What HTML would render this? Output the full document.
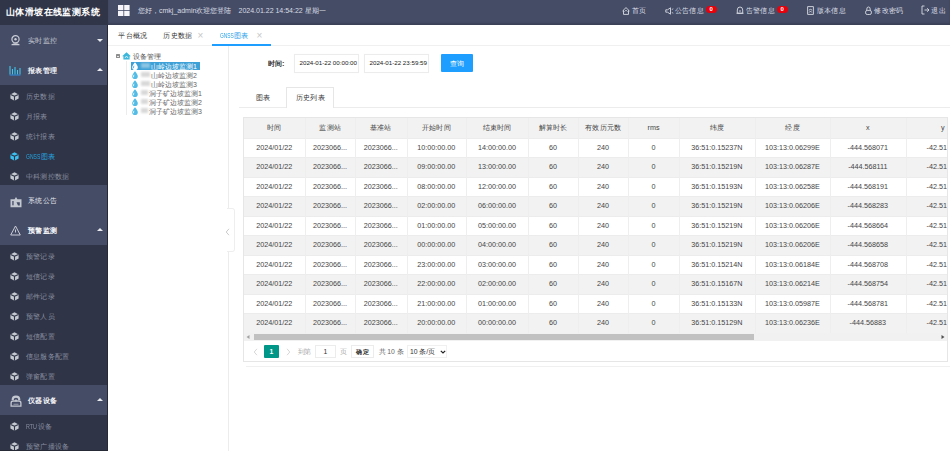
<!DOCTYPE html>
<html><head><meta charset="utf-8">
<style>
*{margin:0;padding:0;box-sizing:border-box}
html,body{width:950px;height:451px;overflow:hidden;background:#fff;font-family:"Liberation Sans",sans-serif;position:relative}
.abs{position:absolute}
.k{display:inline-block;width:1em;text-align:center}
.t{position:absolute;white-space:nowrap;line-height:1}
#side{position:absolute;left:0;top:0;width:108px;height:451px;background:#2f3446}
#logo{position:absolute;left:0;top:0;width:108px;height:25px;background:#303548}
.top{position:absolute;left:0;width:107px;height:30px;background:#454c66}
.caret{position:absolute;left:97px;width:0;height:0;border-left:3px solid transparent;border-right:3px solid transparent}
.caret.dn{border-top:3px solid #e9ebf0;top:14px}
.caret.up{border-bottom:3px solid #e9ebf0;top:13px}
.tl{font-size:7.4px;color:#c9cdd6;left:27.8px}
.tl.b{color:#f4f5f8;font-weight:bold}
.tl.w{color:#e3e6ec}
.sl{font-size:7.2px;color:#8a90a2;left:26px}
#hdr{position:absolute;left:108px;top:0;width:842px;height:25px;background:#454c66;box-shadow:inset 0 -2px 2px rgba(0,0,0,0.15)}
.hl{font-size:7.4px;color:#d9dce4;top:6.9px}
.badge{position:absolute;top:5.6px;width:10.5px;height:7px;border-radius:3.5px;background:#e8000b;color:#fff;font-size:6px;font-weight:bold;text-align:center;line-height:7px}
#tabs{position:absolute;left:108px;top:25px;width:842px;height:21px;background:#fff;border-bottom:1px solid #f0f0f0}
.tb{font-size:7.4px;color:#333;top:7px}
.x{font-size:10px;color:#c8c8c8}
#tree{position:absolute;left:108px;top:46px;width:121px;height:405px;border-right:1px solid #ececec}
.tr{font-size:7px;color:#666;left:32px}
.lbl{font-size:7.2px;color:#333}
.inp{position:absolute;height:19px;border:1px solid #ececec;background:#fff;box-shadow:0 0 1px rgba(0,0,0,0.04)}
.it{font-size:6.2px;color:#222}
#tbox{position:absolute;left:243px;top:117px;width:705px;height:245px;border:1px solid #e6e6e6;overflow:hidden}
.c{font-size:7.2px;color:#444;text-align:center}
.pg{font-size:6.8px;color:#333}
</style></head><body>

<div id="side">
<div id="logo"></div><div class="t" style="left:6px;top:7px;font-size:9.4px;letter-spacing:0.6px;font-weight:bold;color:#fff"><span class="k">山</span><span class="k">体</span><span class="k">滑</span><span class="k">坡</span><span class="k">在</span><span class="k">线</span><span class="k">监</span><span class="k">测</span><span class="k">系</span><span class="k">统</span></div>
<div class="top" style="top:25px"></div><div class="t tl" style="top:36.8px"><span class="k">实</span><span class="k">时</span><span class="k">监</span><span class="k">控</span></div>
<div class="caret dn" style="top:39px"></div>
<div class="top" style="top:55px"></div><div class="t tl b" style="top:66.8px"><span class="k">报</span><span class="k">表</span><span class="k">管</span><span class="k">理</span></div>
<div class="caret up" style="top:68px"></div>
<div class="top" style="top:185px"></div><div class="t tl w" style="top:196.8px"><span class="k">系</span><span class="k">统</span><span class="k">公</span><span class="k">告</span></div>
<div class="top" style="top:215px"></div><div class="t tl b" style="top:226.8px"><span class="k">预</span><span class="k">警</span><span class="k">监</span><span class="k">测</span></div>
<div class="caret up" style="top:228px"></div>
<div class="top" style="top:385px"></div><div class="t tl b" style="top:396.8px"><span class="k">仪</span><span class="k">器</span><span class="k">设</span><span class="k">备</span></div>
<div class="caret up" style="top:398px"></div>
<svg class="abs" style="left:10px;top:92px" width="9" height="9" viewBox="0 0 9 9"><path d="M4.5 0.3 L8.6 2.4 L8.6 6.6 L4.5 8.7 L0.4 6.6 L0.4 2.4 Z" fill="#c4c8d0"/><path d="M4.5 4.3 L4.5 8.7 M4.5 4.3 L0.6 2.4 M4.5 4.3 L8.4 2.4" stroke="#2f3446" stroke-width="1.1" fill="none"/></svg>
<div class="t sl" style="top:93.3px"><span class="k">历</span><span class="k">史</span><span class="k">数</span><span class="k">据</span></div>
<svg class="abs" style="left:10px;top:112px" width="9" height="9" viewBox="0 0 9 9"><path d="M4.5 0.3 L8.6 2.4 L8.6 6.6 L4.5 8.7 L0.4 6.6 L0.4 2.4 Z" fill="#c4c8d0"/><path d="M4.5 4.3 L4.5 8.7 M4.5 4.3 L0.6 2.4 M4.5 4.3 L8.4 2.4" stroke="#2f3446" stroke-width="1.1" fill="none"/></svg>
<div class="t sl" style="top:113.3px"><span class="k">月</span><span class="k">报</span><span class="k">表</span></div>
<svg class="abs" style="left:10px;top:132px" width="9" height="9" viewBox="0 0 9 9"><path d="M4.5 0.3 L8.6 2.4 L8.6 6.6 L4.5 8.7 L0.4 6.6 L0.4 2.4 Z" fill="#c4c8d0"/><path d="M4.5 4.3 L4.5 8.7 M4.5 4.3 L0.6 2.4 M4.5 4.3 L8.4 2.4" stroke="#2f3446" stroke-width="1.1" fill="none"/></svg>
<div class="t sl" style="top:133.3px"><span class="k">统</span><span class="k">计</span><span class="k">报</span><span class="k">表</span></div>
<svg class="abs" style="left:10px;top:152px" width="9" height="9" viewBox="0 0 9 9"><path d="M4.5 0.3 L8.6 2.4 L8.6 6.6 L4.5 8.7 L0.4 6.6 L0.4 2.4 Z" fill="#3cc0ef"/><path d="M4.5 4.3 L4.5 8.7 M4.5 4.3 L0.6 2.4 M4.5 4.3 L8.4 2.4" stroke="#2f3446" stroke-width="1.1" fill="none"/></svg>
<div class="t sl" style="top:153.3px;color:#25a5e2"><span style="display:inline-block;width:14.5px"><span style="display:inline-block;transform:scaleX(0.7);transform-origin:0 50%">GNSS</span></span><span class="k">图</span><span class="k">表</span></div>
<svg class="abs" style="left:10px;top:172px" width="9" height="9" viewBox="0 0 9 9"><path d="M4.5 0.3 L8.6 2.4 L8.6 6.6 L4.5 8.7 L0.4 6.6 L0.4 2.4 Z" fill="#c4c8d0"/><path d="M4.5 4.3 L4.5 8.7 M4.5 4.3 L0.6 2.4 M4.5 4.3 L8.4 2.4" stroke="#2f3446" stroke-width="1.1" fill="none"/></svg>
<div class="t sl" style="top:173.3px"><span class="k">中</span><span class="k">科</span><span class="k">测</span><span class="k">控</span><span class="k">数</span><span class="k">据</span></div>
<svg class="abs" style="left:10px;top:252px" width="9" height="9" viewBox="0 0 9 9"><path d="M4.5 0.3 L8.6 2.4 L8.6 6.6 L4.5 8.7 L0.4 6.6 L0.4 2.4 Z" fill="#c4c8d0"/><path d="M4.5 4.3 L4.5 8.7 M4.5 4.3 L0.6 2.4 M4.5 4.3 L8.4 2.4" stroke="#2f3446" stroke-width="1.1" fill="none"/></svg>
<div class="t sl" style="top:253.3px"><span class="k">预</span><span class="k">警</span><span class="k">记</span><span class="k">录</span></div>
<svg class="abs" style="left:10px;top:272px" width="9" height="9" viewBox="0 0 9 9"><path d="M4.5 0.3 L8.6 2.4 L8.6 6.6 L4.5 8.7 L0.4 6.6 L0.4 2.4 Z" fill="#c4c8d0"/><path d="M4.5 4.3 L4.5 8.7 M4.5 4.3 L0.6 2.4 M4.5 4.3 L8.4 2.4" stroke="#2f3446" stroke-width="1.1" fill="none"/></svg>
<div class="t sl" style="top:273.3px"><span class="k">短</span><span class="k">信</span><span class="k">记</span><span class="k">录</span></div>
<svg class="abs" style="left:10px;top:292px" width="9" height="9" viewBox="0 0 9 9"><path d="M4.5 0.3 L8.6 2.4 L8.6 6.6 L4.5 8.7 L0.4 6.6 L0.4 2.4 Z" fill="#c4c8d0"/><path d="M4.5 4.3 L4.5 8.7 M4.5 4.3 L0.6 2.4 M4.5 4.3 L8.4 2.4" stroke="#2f3446" stroke-width="1.1" fill="none"/></svg>
<div class="t sl" style="top:293.3px"><span class="k">邮</span><span class="k">件</span><span class="k">记</span><span class="k">录</span></div>
<svg class="abs" style="left:10px;top:312px" width="9" height="9" viewBox="0 0 9 9"><path d="M4.5 0.3 L8.6 2.4 L8.6 6.6 L4.5 8.7 L0.4 6.6 L0.4 2.4 Z" fill="#c4c8d0"/><path d="M4.5 4.3 L4.5 8.7 M4.5 4.3 L0.6 2.4 M4.5 4.3 L8.4 2.4" stroke="#2f3446" stroke-width="1.1" fill="none"/></svg>
<div class="t sl" style="top:313.3px"><span class="k">预</span><span class="k">警</span><span class="k">人</span><span class="k">员</span></div>
<svg class="abs" style="left:10px;top:332px" width="9" height="9" viewBox="0 0 9 9"><path d="M4.5 0.3 L8.6 2.4 L8.6 6.6 L4.5 8.7 L0.4 6.6 L0.4 2.4 Z" fill="#c4c8d0"/><path d="M4.5 4.3 L4.5 8.7 M4.5 4.3 L0.6 2.4 M4.5 4.3 L8.4 2.4" stroke="#2f3446" stroke-width="1.1" fill="none"/></svg>
<div class="t sl" style="top:333.3px"><span class="k">短</span><span class="k">信</span><span class="k">配</span><span class="k">置</span></div>
<svg class="abs" style="left:10px;top:352px" width="9" height="9" viewBox="0 0 9 9"><path d="M4.5 0.3 L8.6 2.4 L8.6 6.6 L4.5 8.7 L0.4 6.6 L0.4 2.4 Z" fill="#c4c8d0"/><path d="M4.5 4.3 L4.5 8.7 M4.5 4.3 L0.6 2.4 M4.5 4.3 L8.4 2.4" stroke="#2f3446" stroke-width="1.1" fill="none"/></svg>
<div class="t sl" style="top:353.3px"><span class="k">信</span><span class="k">息</span><span class="k">服</span><span class="k">务</span><span class="k">配</span><span class="k">置</span></div>
<svg class="abs" style="left:10px;top:372px" width="9" height="9" viewBox="0 0 9 9"><path d="M4.5 0.3 L8.6 2.4 L8.6 6.6 L4.5 8.7 L0.4 6.6 L0.4 2.4 Z" fill="#c4c8d0"/><path d="M4.5 4.3 L4.5 8.7 M4.5 4.3 L0.6 2.4 M4.5 4.3 L8.4 2.4" stroke="#2f3446" stroke-width="1.1" fill="none"/></svg>
<div class="t sl" style="top:373.3px"><span class="k">弹</span><span class="k">窗</span><span class="k">配</span><span class="k">置</span></div>
<svg class="abs" style="left:10px;top:422px" width="9" height="9" viewBox="0 0 9 9"><path d="M4.5 0.3 L8.6 2.4 L8.6 6.6 L4.5 8.7 L0.4 6.6 L0.4 2.4 Z" fill="#c4c8d0"/><path d="M4.5 4.3 L4.5 8.7 M4.5 4.3 L0.6 2.4 M4.5 4.3 L8.4 2.4" stroke="#2f3446" stroke-width="1.1" fill="none"/></svg>
<div class="t sl" style="top:423.3px"><span style="display:inline-block;width:11.5px"><span style="display:inline-block;transform:scaleX(0.75);transform-origin:0 50%">RTU</span></span><span class="k">设</span><span class="k">备</span></div>
<svg class="abs" style="left:10px;top:442px" width="9" height="9" viewBox="0 0 9 9"><path d="M4.5 0.3 L8.6 2.4 L8.6 6.6 L4.5 8.7 L0.4 6.6 L0.4 2.4 Z" fill="#c4c8d0"/><path d="M4.5 4.3 L4.5 8.7 M4.5 4.3 L0.6 2.4 M4.5 4.3 L8.4 2.4" stroke="#2f3446" stroke-width="1.1" fill="none"/></svg>
<div class="t sl" style="top:443.3px"><span class="k">预</span><span class="k">警</span><span class="k">广</span><span class="k">播</span><span class="k">设</span><span class="k">备</span></div>
<svg class="abs" style="left:10px;top:35px" width="11" height="11" viewBox="0 0 11 11"><circle cx="5.5" cy="4.3" r="3.6" fill="none" stroke="#c9ccd5" stroke-width="1.2"/><circle cx="5.5" cy="4.3" r="1.2" fill="#c9ccd5"/><path d="M1.5 9.3 Q5.5 7.3 9.5 9.3 L9.5 10.3 L1.5 10.3 Z" fill="#c9ccd5"/></svg>
<svg class="abs" style="left:9px;top:65px" width="12" height="11" viewBox="0 0 12 11"><path d="M1 1 V9.5 M3.5 4 V9.5 M6 2 V9.5 M8.5 5 V9.5 M11 3 V9.5" stroke="#3fc6ee" stroke-width="1.1"/><path d="M0.5 10 H11.5" stroke="#2c8fe0" stroke-width="1"/></svg>
<svg class="abs" style="left:10px;top:196px" width="12" height="12" viewBox="0 0 12 12"><path d="M0.5 3.2 H4.6 L6 1 L7.4 3.2 H11.5 V11.2 H0.5 Z" fill="#c4c8d1"/><rect x="2.3" y="5" width="1.3" height="4.3" fill="#454c66"/><path d="M6.5 6.3 H9.8 V9.6 H8 Z" fill="#454c66"/></svg>
<svg class="abs" style="left:10px;top:225px" width="11" height="11" viewBox="0 0 11 11"><path d="M5.5 1 L10.3 10 L0.7 10 Z" fill="none" stroke="#c9ccd5" stroke-width="1"/><path d="M5.5 4.5 V7.5" stroke="#c9ccd5" stroke-width="1"/></svg>
<svg class="abs" style="left:10px;top:395px" width="12" height="12" viewBox="0 0 12 12"><path d="M1.6 5 Q1.6 0.6 6 0.6 Q10.4 0.6 10.4 5 L8.3 5 Q8.3 2.8 6 2.8 Q3.7 2.8 3.7 5 Z" fill="#c4c8d1"/><path d="M1.1 11.2 V8 Q1.1 6 3.1 6 H8.9 Q10.9 6 10.9 8 V11.2 Z" fill="none" stroke="#c4c8d1" stroke-width="1.3"/><path d="M3.5 9.3 H8.5" stroke="#8a90a0" stroke-width="1.2"/><path d="M6 4.5 V6.5" stroke="#c4c8d1" stroke-width="1.5"/></svg>
<div class="abs" style="left:107px;top:25px;width:1px;height:426px;background:#262a36"></div><div class="abs" style="left:0;top:450px;width:108px;height:1px;background:#262a36"></div>
</div>
<div id="hdr"></div>
<svg class="abs" style="left:117.5px;top:4.5px" width="12" height="11" viewBox="0 0 12 11"><rect x="0" y="0" width="5.4" height="5.1" fill="#f6f6fa"/><rect x="6.2" y="0" width="5.4" height="5.1" fill="#f6f6fa"/><rect x="0" y="5.9" width="5.4" height="5.1" fill="#f6f6fa"/><rect x="6.2" y="5.9" width="5.4" height="5.1" fill="#f6f6fa"/></svg>
<div class="t hl" style="left:138px;top:6.8px;font-size:7px"><span class="k">您</span><span class="k">好</span><span class="k">，</span>cmkj_admin<span class="k">欢</span><span class="k">迎</span><span class="k">您</span><span class="k">登</span><span class="k">陆</span></div>
<div class="t hl" style="left:238.5px;top:6.8px;font-size:7px">2024.01.22 14:54:22 <span class="k">星</span><span class="k">期</span><span class="k">一</span></div>
<div class="t hl" style="left:631.5px"><span class="k">首</span><span class="k">页</span></div>
<div class="t hl" style="left:674.5px"><span class="k">公</span><span class="k">告</span><span class="k">信</span><span class="k">息</span></div>
<div class="t hl" style="left:745.5px"><span class="k">告</span><span class="k">警</span><span class="k">信</span><span class="k">息</span></div>
<div class="t hl" style="left:816.5px"><span class="k">版</span><span class="k">本</span><span class="k">信</span><span class="k">息</span></div>
<div class="t hl" style="left:874px"><span class="k">修</span><span class="k">改</span><span class="k">密</span><span class="k">码</span></div>
<div class="t hl" style="left:931px"><span class="k">退</span><span class="k">出</span></div>
<div class="badge" style="left:706px">0</div><div class="badge" style="left:777px">0</div>
<svg class="abs" style="left:621.5px;top:6.8px" width="8" height="8" viewBox="0 0 8 8"><path d="M0.5 4 L4 0.6 L7.5 4 M1.5 3.2 V7.4 H6.5 V3.2 M2.6 4.6 L4 3.2 L5.4 4.6" fill="none" stroke="#d9dce4" stroke-width="0.9"/></svg>
<svg class="abs" style="left:664.5px;top:7.3px" width="9" height="8" viewBox="0 0 9 8"><path d="M0.8 2.8 H2.5 L5.5 0.8 V7.2 L2.5 5.2 H0.8 Z" fill="none" stroke="#d9dce4" stroke-width="0.9"/><path d="M6.8 2.5 L8.3 1.8 M6.8 5.5 L8.3 6.2" stroke="#d9dce4" stroke-width="0.8"/></svg>
<svg class="abs" style="left:736px;top:6px" width="8" height="8" viewBox="0 0 8 8"><path d="M1.3 7.2 V4 Q1.3 1 4 1 Q6.7 1 6.7 4 V7.2 Z M0.5 7.3 H7.5" fill="none" stroke="#d9dce4" stroke-width="0.9"/><circle cx="4" cy="5" r="0.8" fill="#d9dce4"/></svg>
<svg class="abs" style="left:807px;top:6px" width="7" height="9" viewBox="0 0 7 9"><path d="M0.6 0.6 H6.4 V8.4 H0.6 Z M1.8 4.2 Q3.5 2.5 5.2 4.2 M2.2 6.5 L3.5 5 L4.8 6.5" fill="none" stroke="#d9dce4" stroke-width="0.9"/></svg>
<svg class="abs" style="left:865px;top:6px" width="7" height="9" viewBox="0 0 7 9"><path d="M1.8 4.3 V3 Q1.8 1 3.5 1 Q5.2 1 5.2 3 V4.3" fill="none" stroke="#d9dce4" stroke-width="0.9"/><rect x="0.6" y="4.4" width="5.8" height="4.1" rx="1.6" fill="none" stroke="#d9dce4" stroke-width="0.9"/></svg>
<svg class="abs" style="left:921px;top:5px" width="9" height="10" viewBox="0 0 9 10"><path d="M3.5 1 H1 V9 H3.5 M3.5 5 H8 M6.2 3.2 L8 5 L6.2 6.8" fill="none" stroke="#d9dce4" stroke-width="0.9"/></svg>
<div id="tabs"></div>
<div class="t tb" style="left:118px;top:32px"><span class="k">平</span><span class="k">台</span><span class="k">概</span><span class="k">况</span></div>
<div class="t tb" style="left:163px;top:32px"><span class="k">历</span><span class="k">史</span><span class="k">数</span><span class="k">据</span></div><div class="t x" style="left:197.5px;top:30.5px">×</div>
<div class="t tb" style="left:220px;top:32px;color:#27a1ea"><span style="display:inline-block;width:13.6px"><span style="display:inline-block;transform:scaleX(0.66);transform-origin:0 50%">GNSS</span></span><span class="k">图</span><span class="k">表</span></div><div class="t x" style="left:256.5px;top:30.5px">×</div>
<div class="abs" style="left:212px;top:44px;width:59px;height:2px;background:#1e9fff"></div>
<div id="tree"></div>
<div class="abs" style="left:115.5px;top:53.5px;width:4.5px;height:4.5px;background:#8e8e8e;border-radius:0.5px"></div><div class="abs" style="left:116.5px;top:55.5px;width:2.5px;height:0.8px;background:#e8e8e8"></div>
<svg class="abs" style="left:122px;top:52px" width="9" height="8" viewBox="0 0 9 8"><path d="M4.5 0.2 L8.9 4.2 L7.6 4.2 L7.6 7.6 L1.4 7.6 L1.4 4.2 L0.1 4.2 Z" fill="#3cb6da"/><path d="M2.8 5.6 Q4.5 3.6 6.2 5.6" fill="none" stroke="#fff" stroke-width="0.9"/></svg>
<div class="t" style="left:133px;top:52.5px;font-size:7px;color:#555"><span class="k">设</span><span class="k">备</span><span class="k">管</span><span class="k">理</span></div>
<div class="abs" style="left:126px;top:61px;width:1px;height:54px;background:#ececec"></div>
<div class="abs" style="left:131px;top:61.5px;width:69px;height:8.5px;background:#3da0d6"></div>
<svg class="abs" style="left:132px;top:62.099999999999994px" width="6" height="8" viewBox="0 0 6 8"><path d="M3 0.3 Q5.8 3.8 5.8 5.2 A2.8 2.8 0 0 1 0.2 5.2 Q0.2 3.8 3 0.3 Z" fill="#fff"/><path d="M2 3.8 Q1.2 5 1.6 6.2" fill="none" stroke="#3da0d6" stroke-width="0.8"/></svg>
<div class="abs" style="left:141px;top:63.3px;width:9px;height:5px;background:#8cc4e4;filter:blur(1px)"></div>
<div class="t" style="left:151px;top:62.8px;font-size:7px;color:#fff"><span class="k">山</span><span class="k">岭</span><span class="k">边</span><span class="k">坡</span><span class="k">监</span><span class="k">测</span>1</div>
<svg class="abs" style="left:132px;top:71.05px" width="6" height="8" viewBox="0 0 6 8"><path d="M3 0.3 Q5.8 3.8 5.8 5.2 A2.8 2.8 0 0 1 0.2 5.2 Q0.2 3.8 3 0.3 Z" fill="#52bce6"/><path d="M2 3.8 Q1.2 5 1.6 6.2" fill="none" stroke="#fff" stroke-width="0.8"/></svg>
<div class="abs" style="left:141px;top:72.25px;width:9px;height:5px;background:#d8d8d8;filter:blur(1px)"></div>
<div class="t" style="left:151px;top:71.75px;font-size:7px;color:#666"><span class="k">山</span><span class="k">岭</span><span class="k">边</span><span class="k">坡</span><span class="k">监</span><span class="k">测</span>2</div>
<svg class="abs" style="left:132px;top:79.99999999999999px" width="6" height="8" viewBox="0 0 6 8"><path d="M3 0.3 Q5.8 3.8 5.8 5.2 A2.8 2.8 0 0 1 0.2 5.2 Q0.2 3.8 3 0.3 Z" fill="#52bce6"/><path d="M2 3.8 Q1.2 5 1.6 6.2" fill="none" stroke="#fff" stroke-width="0.8"/></svg>
<div class="abs" style="left:141px;top:81.19999999999999px;width:9px;height:5px;background:#d8d8d8;filter:blur(1px)"></div>
<div class="t" style="left:151px;top:80.69999999999999px;font-size:7px;color:#666"><span class="k">山</span><span class="k">岭</span><span class="k">边</span><span class="k">坡</span><span class="k">监</span><span class="k">测</span>3</div>
<svg class="abs" style="left:132px;top:88.94999999999999px" width="6" height="8" viewBox="0 0 6 8"><path d="M3 0.3 Q5.8 3.8 5.8 5.2 A2.8 2.8 0 0 1 0.2 5.2 Q0.2 3.8 3 0.3 Z" fill="#52bce6"/><path d="M2 3.8 Q1.2 5 1.6 6.2" fill="none" stroke="#fff" stroke-width="0.8"/></svg>
<div class="abs" style="left:141px;top:90.14999999999999px;width:7px;height:5px;background:#d8d8d8;filter:blur(1px)"></div>
<div class="t" style="left:149px;top:89.64999999999999px;font-size:7px;color:#666"><span class="k">洞</span><span class="k">子</span><span class="k">矿</span><span class="k">边</span><span class="k">坡</span><span class="k">监</span><span class="k">测</span>1</div>
<svg class="abs" style="left:132px;top:97.89999999999999px" width="6" height="8" viewBox="0 0 6 8"><path d="M3 0.3 Q5.8 3.8 5.8 5.2 A2.8 2.8 0 0 1 0.2 5.2 Q0.2 3.8 3 0.3 Z" fill="#52bce6"/><path d="M2 3.8 Q1.2 5 1.6 6.2" fill="none" stroke="#fff" stroke-width="0.8"/></svg>
<div class="abs" style="left:141px;top:99.1px;width:7px;height:5px;background:#d8d8d8;filter:blur(1px)"></div>
<div class="t" style="left:149px;top:98.6px;font-size:7px;color:#666"><span class="k">洞</span><span class="k">子</span><span class="k">矿</span><span class="k">边</span><span class="k">坡</span><span class="k">监</span><span class="k">测</span>2</div>
<svg class="abs" style="left:132px;top:106.85px" width="6" height="8" viewBox="0 0 6 8"><path d="M3 0.3 Q5.8 3.8 5.8 5.2 A2.8 2.8 0 0 1 0.2 5.2 Q0.2 3.8 3 0.3 Z" fill="#52bce6"/><path d="M2 3.8 Q1.2 5 1.6 6.2" fill="none" stroke="#fff" stroke-width="0.8"/></svg>
<div class="abs" style="left:141px;top:108.05px;width:7px;height:5px;background:#d8d8d8;filter:blur(1px)"></div>
<div class="t" style="left:149px;top:107.55px;font-size:7px;color:#666"><span class="k">洞</span><span class="k">子</span><span class="k">矿</span><span class="k">边</span><span class="k">坡</span><span class="k">监</span><span class="k">测</span>3</div>
<div class="abs" style="left:227px;top:208px;width:8px;height:44px;border:1px solid #eeeeee;border-left:none;background:#fff;border-radius:0 3px 3px 0"></div>
<svg class="abs" style="left:225px;top:228px" width="5" height="8" viewBox="0 0 5 8"><path d="M4 0.8 L1.2 4 L4 7.2" fill="none" stroke="#c4c4c4" stroke-width="0.9"/></svg>
<div class="t lbl" style="left:267.5px;top:59.5px;font-weight:bold"><span class="k">时</span><span class="k">间</span>:</div>
<div class="inp" style="left:294px;top:53.5px;width:65px"></div><div class="t it" style="left:299.5px;top:60px">2024-01-22 00:00:00</div>
<div class="inp" style="left:364px;top:53.5px;width:65px"></div><div class="t it" style="left:369.5px;top:60px">2024-01-22 23:59:59</div>
<div class="abs" style="left:441px;top:53.5px;width:32px;height:18.5px;background:#1e9fff;border-radius:1px"></div><div class="t" style="left:450px;top:59.5px;font-size:7.2px;color:#fff"><span class="k">查</span><span class="k">询</span></div>
<div class="abs" style="left:239px;top:106.5px;width:711px;height:1px;background:#ececec"></div>
<div class="abs" style="left:286px;top:86.5px;width:48px;height:21px;border:1px solid #e6e6e6;border-bottom:none;background:#fff"></div>
<div class="t lbl" style="left:255.5px;top:94px"><span class="k">图</span><span class="k">表</span></div>
<div class="t lbl" style="left:296px;top:94px"><span class="k">历</span><span class="k">史</span><span class="k">列</span><span class="k">表</span></div>
<div id="tbox">
<div class="abs" style="left:0;top:0;width:706px;height:19.5px;background:#f2f2f2"></div>
<div class="abs" style="left:0;top:19.5px;width:706px;height:1px;background:#ececec"></div>
<div class="abs" style="left:0;top:39.0px;width:706px;height:19.5px;background:#f2f2f2"></div>
<div class="abs" style="left:0;top:39.0px;width:706px;height:1px;background:#ececec"></div>
<div class="abs" style="left:0;top:58.5px;width:706px;height:1px;background:#ececec"></div>
<div class="abs" style="left:0;top:78.0px;width:706px;height:19.5px;background:#f2f2f2"></div>
<div class="abs" style="left:0;top:78.0px;width:706px;height:1px;background:#ececec"></div>
<div class="abs" style="left:0;top:97.5px;width:706px;height:1px;background:#ececec"></div>
<div class="abs" style="left:0;top:117.0px;width:706px;height:19.5px;background:#f2f2f2"></div>
<div class="abs" style="left:0;top:117.0px;width:706px;height:1px;background:#ececec"></div>
<div class="abs" style="left:0;top:136.5px;width:706px;height:1px;background:#ececec"></div>
<div class="abs" style="left:0;top:156.0px;width:706px;height:19.5px;background:#f2f2f2"></div>
<div class="abs" style="left:0;top:156.0px;width:706px;height:1px;background:#ececec"></div>
<div class="abs" style="left:0;top:175.5px;width:706px;height:1px;background:#ececec"></div>
<div class="abs" style="left:0;top:195.0px;width:706px;height:19.5px;background:#f2f2f2"></div>
<div class="abs" style="left:0;top:195.0px;width:706px;height:1px;background:#ececec"></div>
<div class="abs" style="left:0;top:214.5px;width:706px;height:1px;background:#ececec"></div>
<div class="abs" style="left:61px;top:0;width:1px;height:214.5px;background:#eeeeee"></div>
<div class="abs" style="left:111px;top:0;width:1px;height:214.5px;background:#eeeeee"></div>
<div class="abs" style="left:162.60000000000002px;top:0;width:1px;height:214.5px;background:#eeeeee"></div>
<div class="abs" style="left:222px;top:0;width:1px;height:214.5px;background:#eeeeee"></div>
<div class="abs" style="left:284px;top:0;width:1px;height:214.5px;background:#eeeeee"></div>
<div class="abs" style="left:334px;top:0;width:1px;height:214.5px;background:#eeeeee"></div>
<div class="abs" style="left:384px;top:0;width:1px;height:214.5px;background:#eeeeee"></div>
<div class="abs" style="left:435px;top:0;width:1px;height:214.5px;background:#eeeeee"></div>
<div class="abs" style="left:511px;top:0;width:1px;height:214.5px;background:#eeeeee"></div>
<div class="abs" style="left:586px;top:0;width:1px;height:214.5px;background:#eeeeee"></div>
<div class="abs" style="left:661.6px;top:0;width:1px;height:214.5px;background:#eeeeee"></div>
<div class="t c" style="left:0.25px;width:60px;top:6.2px"><span class="k">时</span><span class="k">间</span></div>
<div class="t c" style="left:56.0px;width:60px;top:6.2px"><span class="k">监</span><span class="k">测</span><span class="k">站</span></div>
<div class="t c" style="left:106.80000000000001px;width:60px;top:6.2px"><span class="k">基</span><span class="k">准</span><span class="k">站</span></div>
<div class="t c" style="left:162.3px;width:60px;top:6.2px"><span class="k">开</span><span class="k">始</span><span class="k">时</span><span class="k">间</span></div>
<div class="t c" style="left:223.0px;width:60px;top:6.2px"><span class="k">结</span><span class="k">束</span><span class="k">时</span><span class="k">间</span></div>
<div class="t c" style="left:279.0px;width:60px;top:6.2px"><span class="k">解</span><span class="k">算</span><span class="k">时</span><span class="k">长</span></div>
<div class="t c" style="left:329.0px;width:60px;top:6.2px"><span class="k">有</span><span class="k">效</span><span class="k">历</span><span class="k">元</span><span class="k">数</span></div>
<div class="t c" style="left:379.5px;width:60px;top:6.2px">rms</div>
<div class="t c" style="left:442.79999999999995px;width:60px;top:6.2px"><span class="k">纬</span><span class="k">度</span></div>
<div class="t c" style="left:518.5px;width:60px;top:6.2px"><span class="k">经</span><span class="k">度</span></div>
<div class="t c" style="left:593.8px;width:60px;top:6.2px">x</div>
<div class="t c" style="left:668.8px;width:60px;top:6.2px">y</div>
<div class="t c" style="left:-4.75px;width:70px;top:25.8px">2024/01/22</div>
<div class="t c" style="left:51.0px;width:70px;top:25.8px">2023066...</div>
<div class="t c" style="left:101.80000000000001px;width:70px;top:25.8px">2023066...</div>
<div class="t c" style="left:157.3px;width:70px;top:25.8px">10:00:00.00</div>
<div class="t c" style="left:218.0px;width:70px;top:25.8px">14:00:00.00</div>
<div class="t c" style="left:274.0px;width:70px;top:25.8px">60</div>
<div class="t c" style="left:324.0px;width:70px;top:25.8px">240</div>
<div class="t c" style="left:374.5px;width:70px;top:25.8px">0</div>
<div class="t c" style="left:437.79999999999995px;width:70px;top:25.8px">36:51:0.15237N</div>
<div class="t c" style="left:513.5px;width:70px;top:25.8px">103:13:0.06299E</div>
<div class="t c" style="left:588.8px;width:70px;top:25.8px">-444.568071</div>
<div class="t c" style="left:663.8px;width:70px;top:25.8px">-42.51763</div>
<div class="t c" style="left:-4.75px;width:70px;top:45.3px">2024/01/22</div>
<div class="t c" style="left:51.0px;width:70px;top:45.3px">2023066...</div>
<div class="t c" style="left:101.80000000000001px;width:70px;top:45.3px">2023066...</div>
<div class="t c" style="left:157.3px;width:70px;top:45.3px">09:00:00.00</div>
<div class="t c" style="left:218.0px;width:70px;top:45.3px">13:00:00.00</div>
<div class="t c" style="left:274.0px;width:70px;top:45.3px">60</div>
<div class="t c" style="left:324.0px;width:70px;top:45.3px">240</div>
<div class="t c" style="left:374.5px;width:70px;top:45.3px">0</div>
<div class="t c" style="left:437.79999999999995px;width:70px;top:45.3px">36:51:0.15219N</div>
<div class="t c" style="left:513.5px;width:70px;top:45.3px">103:13:0.06287E</div>
<div class="t c" style="left:588.8px;width:70px;top:45.3px">-444.568111</div>
<div class="t c" style="left:663.8px;width:70px;top:45.3px">-42.51763</div>
<div class="t c" style="left:-4.75px;width:70px;top:64.8px">2024/01/22</div>
<div class="t c" style="left:51.0px;width:70px;top:64.8px">2023066...</div>
<div class="t c" style="left:101.80000000000001px;width:70px;top:64.8px">2023066...</div>
<div class="t c" style="left:157.3px;width:70px;top:64.8px">08:00:00.00</div>
<div class="t c" style="left:218.0px;width:70px;top:64.8px">12:00:00.00</div>
<div class="t c" style="left:274.0px;width:70px;top:64.8px">60</div>
<div class="t c" style="left:324.0px;width:70px;top:64.8px">240</div>
<div class="t c" style="left:374.5px;width:70px;top:64.8px">0</div>
<div class="t c" style="left:437.79999999999995px;width:70px;top:64.8px">36:51:0.15193N</div>
<div class="t c" style="left:513.5px;width:70px;top:64.8px">103:13:0.06258E</div>
<div class="t c" style="left:588.8px;width:70px;top:64.8px">-444.568191</div>
<div class="t c" style="left:663.8px;width:70px;top:64.8px">-42.51763</div>
<div class="t c" style="left:-4.75px;width:70px;top:84.3px">2024/01/22</div>
<div class="t c" style="left:51.0px;width:70px;top:84.3px">2023066...</div>
<div class="t c" style="left:101.80000000000001px;width:70px;top:84.3px">2023066...</div>
<div class="t c" style="left:157.3px;width:70px;top:84.3px">02:00:00.00</div>
<div class="t c" style="left:218.0px;width:70px;top:84.3px">06:00:00.00</div>
<div class="t c" style="left:274.0px;width:70px;top:84.3px">60</div>
<div class="t c" style="left:324.0px;width:70px;top:84.3px">240</div>
<div class="t c" style="left:374.5px;width:70px;top:84.3px">0</div>
<div class="t c" style="left:437.79999999999995px;width:70px;top:84.3px">36:51:0.15219N</div>
<div class="t c" style="left:513.5px;width:70px;top:84.3px">103:13:0.06206E</div>
<div class="t c" style="left:588.8px;width:70px;top:84.3px">-444.568283</div>
<div class="t c" style="left:663.8px;width:70px;top:84.3px">-42.51763</div>
<div class="t c" style="left:-4.75px;width:70px;top:103.8px">2024/01/22</div>
<div class="t c" style="left:51.0px;width:70px;top:103.8px">2023066...</div>
<div class="t c" style="left:101.80000000000001px;width:70px;top:103.8px">2023066...</div>
<div class="t c" style="left:157.3px;width:70px;top:103.8px">01:00:00.00</div>
<div class="t c" style="left:218.0px;width:70px;top:103.8px">05:00:00.00</div>
<div class="t c" style="left:274.0px;width:70px;top:103.8px">60</div>
<div class="t c" style="left:324.0px;width:70px;top:103.8px">240</div>
<div class="t c" style="left:374.5px;width:70px;top:103.8px">0</div>
<div class="t c" style="left:437.79999999999995px;width:70px;top:103.8px">36:51:0.15219N</div>
<div class="t c" style="left:513.5px;width:70px;top:103.8px">103:13:0.06206E</div>
<div class="t c" style="left:588.8px;width:70px;top:103.8px">-444.568664</div>
<div class="t c" style="left:663.8px;width:70px;top:103.8px">-42.51763</div>
<div class="t c" style="left:-4.75px;width:70px;top:123.3px">2024/01/22</div>
<div class="t c" style="left:51.0px;width:70px;top:123.3px">2023066...</div>
<div class="t c" style="left:101.80000000000001px;width:70px;top:123.3px">2023066...</div>
<div class="t c" style="left:157.3px;width:70px;top:123.3px">00:00:00.00</div>
<div class="t c" style="left:218.0px;width:70px;top:123.3px">04:00:00.00</div>
<div class="t c" style="left:274.0px;width:70px;top:123.3px">60</div>
<div class="t c" style="left:324.0px;width:70px;top:123.3px">240</div>
<div class="t c" style="left:374.5px;width:70px;top:123.3px">0</div>
<div class="t c" style="left:437.79999999999995px;width:70px;top:123.3px">36:51:0.15219N</div>
<div class="t c" style="left:513.5px;width:70px;top:123.3px">103:13:0.06206E</div>
<div class="t c" style="left:588.8px;width:70px;top:123.3px">-444.568658</div>
<div class="t c" style="left:663.8px;width:70px;top:123.3px">-42.51763</div>
<div class="t c" style="left:-4.75px;width:70px;top:142.8px">2024/01/22</div>
<div class="t c" style="left:51.0px;width:70px;top:142.8px">2023066...</div>
<div class="t c" style="left:101.80000000000001px;width:70px;top:142.8px">2023066...</div>
<div class="t c" style="left:157.3px;width:70px;top:142.8px">23:00:00.00</div>
<div class="t c" style="left:218.0px;width:70px;top:142.8px">03:00:00.00</div>
<div class="t c" style="left:274.0px;width:70px;top:142.8px">60</div>
<div class="t c" style="left:324.0px;width:70px;top:142.8px">240</div>
<div class="t c" style="left:374.5px;width:70px;top:142.8px">0</div>
<div class="t c" style="left:437.79999999999995px;width:70px;top:142.8px">36:51:0.15214N</div>
<div class="t c" style="left:513.5px;width:70px;top:142.8px">103:13:0.06184E</div>
<div class="t c" style="left:588.8px;width:70px;top:142.8px">-444.568708</div>
<div class="t c" style="left:663.8px;width:70px;top:142.8px">-42.51763</div>
<div class="t c" style="left:-4.75px;width:70px;top:162.3px">2024/01/22</div>
<div class="t c" style="left:51.0px;width:70px;top:162.3px">2023066...</div>
<div class="t c" style="left:101.80000000000001px;width:70px;top:162.3px">2023066...</div>
<div class="t c" style="left:157.3px;width:70px;top:162.3px">22:00:00.00</div>
<div class="t c" style="left:218.0px;width:70px;top:162.3px">02:00:00.00</div>
<div class="t c" style="left:274.0px;width:70px;top:162.3px">60</div>
<div class="t c" style="left:324.0px;width:70px;top:162.3px">240</div>
<div class="t c" style="left:374.5px;width:70px;top:162.3px">0</div>
<div class="t c" style="left:437.79999999999995px;width:70px;top:162.3px">36:51:0.15167N</div>
<div class="t c" style="left:513.5px;width:70px;top:162.3px">103:13:0.06214E</div>
<div class="t c" style="left:588.8px;width:70px;top:162.3px">-444.568754</div>
<div class="t c" style="left:663.8px;width:70px;top:162.3px">-42.51763</div>
<div class="t c" style="left:-4.75px;width:70px;top:181.8px">2024/01/22</div>
<div class="t c" style="left:51.0px;width:70px;top:181.8px">2023066...</div>
<div class="t c" style="left:101.80000000000001px;width:70px;top:181.8px">2023066...</div>
<div class="t c" style="left:157.3px;width:70px;top:181.8px">21:00:00.00</div>
<div class="t c" style="left:218.0px;width:70px;top:181.8px">01:00:00.00</div>
<div class="t c" style="left:274.0px;width:70px;top:181.8px">60</div>
<div class="t c" style="left:324.0px;width:70px;top:181.8px">240</div>
<div class="t c" style="left:374.5px;width:70px;top:181.8px">0</div>
<div class="t c" style="left:437.79999999999995px;width:70px;top:181.8px">36:51:0.15133N</div>
<div class="t c" style="left:513.5px;width:70px;top:181.8px">103:13:0.05987E</div>
<div class="t c" style="left:588.8px;width:70px;top:181.8px">-444.568781</div>
<div class="t c" style="left:663.8px;width:70px;top:181.8px">-42.51763</div>
<div class="t c" style="left:-4.75px;width:70px;top:201.3px">2024/01/22</div>
<div class="t c" style="left:51.0px;width:70px;top:201.3px">2023066...</div>
<div class="t c" style="left:101.80000000000001px;width:70px;top:201.3px">2023066...</div>
<div class="t c" style="left:157.3px;width:70px;top:201.3px">20:00:00.00</div>
<div class="t c" style="left:218.0px;width:70px;top:201.3px">00:00:00.00</div>
<div class="t c" style="left:274.0px;width:70px;top:201.3px">60</div>
<div class="t c" style="left:324.0px;width:70px;top:201.3px">240</div>
<div class="t c" style="left:374.5px;width:70px;top:201.3px">0</div>
<div class="t c" style="left:437.79999999999995px;width:70px;top:201.3px">36:51:0.15129N</div>
<div class="t c" style="left:513.5px;width:70px;top:201.3px">103:13:0.06236E</div>
<div class="t c" style="left:588.8px;width:70px;top:201.3px">-444.56883</div>
<div class="t c" style="left:663.8px;width:70px;top:201.3px">-42.51763</div>
<div class="abs" style="left:0;top:215.0px;width:706px;height:8px;background:#f1f1f1"></div>
<div class="abs" style="left:10px;top:216.0px;width:500px;height:6px;background:#c1c1c1"></div>
<svg class="abs" style="left:2px;top:217.0px" width="4" height="4" viewBox="0 0 4 4"><path d="M3.5 0 L0.5 2 L3.5 4 Z" fill="#a3a3a3"/></svg>
<svg class="abs" style="left:697px;top:217.0px" width="4" height="4" viewBox="0 0 4 4"><path d="M0.5 0 L3.5 2 L0.5 4 Z" fill="#505050"/></svg>
<svg class="abs" style="left:9px;top:230px" width="5" height="8" viewBox="0 0 5 8"><path d="M4 0.8 L1.2 4 L4 7.2" fill="none" stroke="#d2d2d2" stroke-width="0.9"/></svg>
<div class="abs" style="left:20px;top:227px;width:15px;height:13px;background:#009688;border-radius:1px"></div><div class="t" style="left:20px;width:15px;text-align:center;top:230.5px;font-size:6.8px;color:#fff;font-weight:bold">1</div>
<svg class="abs" style="left:42px;top:230px" width="5" height="8" viewBox="0 0 5 8"><path d="M1 0.8 L3.8 4 L1 7.2" fill="none" stroke="#d2d2d2" stroke-width="0.9"/></svg>
<div class="t pg" style="left:53.5px;top:230.5px;color:#aaa"><span class="k">到</span><span class="k">第</span></div>
<div class="abs" style="left:71px;top:227px;width:21px;height:13px;border:1px solid #ececec;background:#fff"></div><div class="t pg" style="left:71px;width:21px;text-align:center;top:230.5px">1</div>
<div class="t pg" style="left:96px;top:230.5px;color:#aaa"><span class="k">页</span></div>
<div class="abs" style="left:107px;top:227px;width:23px;height:13px;border:1px solid #ececec;background:#fff"></div><div class="t pg" style="left:107px;width:23px;text-align:center;top:230.5px;font-size:6.4px;font-weight:bold"><span class="k">确</span><span class="k">定</span></div>
<div class="t pg" style="left:134.5px;top:230.5px;color:#666"><span class="k">共</span> 10 <span class="k">条</span></div>
<div class="abs" style="left:162.5px;top:227px;width:40px;height:13px;border:1px solid #f0f0f0;background:#fff"></div><div class="t pg" style="left:166px;top:230.5px">10 <span class="k">条</span>/<span class="k">页</span></div>
<svg class="abs" style="left:196px;top:231.5px" width="6" height="4" viewBox="0 0 6 4"><path d="M0.8 0.8 L3 3 L5.2 0.8" fill="none" stroke="#222" stroke-width="1.2"/></svg>
</div>
<div class="abs" style="left:246px;top:365.5px;width:704px;height:1px;background:#f0f0f0"></div>
</body></html>
